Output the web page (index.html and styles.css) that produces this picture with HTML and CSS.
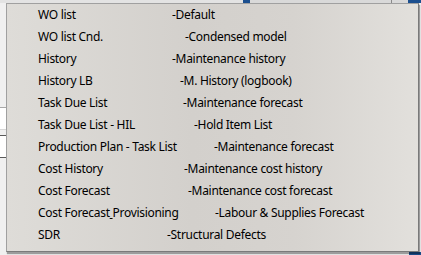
FILE: index.html
```html
<!DOCTYPE html>
<html lang="en">
<head>
    <meta charset="UTF-8">
    <meta name="viewport" content="width=device-width, initial-scale=1.0">
    <title>WO list menu</title>
    <link rel="stylesheet" href="styles.css">
</head>
<body>
    <div class="toolbar">
        <div class="tb-gap"></div>
        <div class="tb-blue tb-narrow"></div>
        <div class="tb-button"><span class="tb-sep"></span></div>
        <div class="tb-blue tb-fill"></div>
    </div>
    <div class="form">
        <div class="field field-light"></div>
        <div class="field field-dark"></div>
    </div>
    <div class="statusbar">
        <div class="sb-gap"></div>
        <div class="tb-blue sb-fill"></div>
    </div>

    <!-- popup menu -->
    <ul class="menu">
        <li class="item"><span class="label" style="width:134px">WO list</span><span class="desc">-Default</span></li>
        <li class="item"><span class="label" style="width:147px">WO list Cnd.</span><span class="desc">-Condensed model</span></li>
        <li class="item"><span class="label" style="width:134px">History</span><span class="desc">-Maintenance history</span></li>
        <li class="item"><span class="label" style="width:142px">History LB</span><span class="desc">-M. History (logbook)</span></li>
        <li class="item"><span class="label" style="width:145px">Task Due List</span><span class="desc">-Maintenance forecast</span></li>
        <li class="item"><span class="label" style="width:156px">Task Due List - HIL</span><span class="desc">-Hold Item List</span></li>
        <li class="item"><span class="label" style="width:176px">Production Plan - Task List</span><span class="desc">-Maintenance forecast</span></li>
        <li class="item"><span class="label" style="width:146px">Cost History</span><span class="desc">-Maintenance cost history</span></li>
        <li class="item"><span class="label" style="width:150px">Cost Forecast</span><span class="desc">-Maintenance cost forecast</span></li>
        <li class="item"><span class="label" style="width:177px">Cost Forecast<u> </u>Provisioning</span><span class="desc">-Labour &amp; Supplies Forecast</span></li>
        <li class="item"><span class="label" style="width:129px">SDR</span><span class="desc">-Structural Defects</span></li>
    </ul>
</body>
</html>
```

FILE: styles.css
```css
  body {
      margin: 0;
      width: 421px;
      height: 255px;
      overflow: hidden;
      position: relative;
      background: #f0f0f0;
      font-family: "Noto Sans", "Liberation Sans", sans-serif;
  }

  /* window behind the menu */
  .toolbar {
      display: flex;
      height: 3px;
  }
  .tb-gap {
      width: 243px;
      background: #e3e3e3;
  }
  .tb-blue {
      background: #1b4f8f;
  }
  .tb-narrow {
      width: 7px;
  }
  .tb-button {
      width: 158px;
      background: #d9d9d9;
      display: flex;
      justify-content: flex-end;
  }
  .tb-sep {
      width: 1px;
      margin-right: 16px;
      background: #8a8a8a;
  }
  .tb-fill {
      flex: 1;
  }

  .form {
      padding-top: 104px;
  }
  .field {
      width: 6px;
      height: 21px;
      background: #fff;
  }
  .field-light {
      border-top: 1px solid #a8a8a8;
      border-bottom: 1px solid #d8d8d8;
  }
  .field-dark {
      margin-top: 5px;
      border-top: 1px solid #5a5a5a;
      border-bottom: 1px solid #5a5a5a;
  }

  .statusbar {
      position: absolute;
      left: 0;
      right: 0;
      bottom: 0;
      height: 3px;
      display: flex;
  }
  .sb-gap {
      width: 409px;
  }
  .sb-fill {
      flex: 1;
  }

  /* popup menu */
  .menu {
      position: absolute;
      left: 6px;
      top: 3px;
      width: 413px;
      margin: 0;
      padding: 0 0 5px 31px;
      box-sizing: border-box;
      list-style: none;
      border: 1px solid #a0a0a0;
      border-right-color: #7a7a7a;
      border-bottom-color: #7a7a7a;
      background: linear-gradient(to right, #dedcd8 0%, #d3d0cc 45%, #d6d3cf 70%, #e2e0dc 100%);
      box-shadow: 1px 2px 1px rgba(0, 0, 0, 0.35);
  }

  .item {
      display: flex;
      align-items: center;
      height: 22px;
      padding-bottom: 2px;
      box-sizing: border-box;
      font-size: 12px;
      letter-spacing: -0.3px;
      color: #000;
      white-space: nowrap;
  }

  .label {
      flex: none;
  }
  .label u {
      text-decoration: underline;
      text-underline-offset: 1px;
  }
```
